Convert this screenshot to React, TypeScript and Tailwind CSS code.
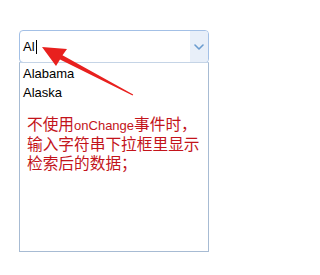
import React from "react";

const states = ["Alabama", "Alaska"];

function Chevron() {
  return (
    <svg width="10" height="6" viewBox="0 0 10 6" fill="none">
      <path d="M1 1l4 4 4-4" stroke="#6a9ccf" strokeWidth="1.6" strokeLinecap="round" strokeLinejoin="round" />
    </svg>
  );
}

export default function App() {
  return (
    <div
      className="relative w-[237px] h-[275px] bg-white pt-[30px] pl-[19px]"
      style={{ fontFamily: '"Liberation Sans", "Noto Sans CJK SC", sans-serif' }}
    >
      <div className="w-[190px]">
        <div className="flex h-[33px] border border-[#a3c0e6] rounded-[4px] overflow-hidden">
          <div className="flex-1 flex items-center pl-[3px] text-[13px] text-black">
            <span>Al</span>
            <span className="ml-[1px] w-px h-[14px] bg-black" />
          </div>
          <div className="w-[18px] flex items-center justify-center bg-[#e8eff9]">
            <Chevron />
          </div>
        </div>
        <div className="h-[190px] border border-[#a7bbd3] border-t-[#c5d4e6] -mt-px">
          <ul className="text-[13px] leading-[19px] text-black pl-[3px] pt-[1px]">
            {states.map((s) => (
              <li key={s}>{s}</li>
            ))}
          </ul>
          <p className="mt-[13px] pl-[7px] text-[15.7px] leading-[19px] text-[#c3141b]">
            不使用<span className="text-[13px]">onChange</span>事件时，
            <br />
            输入字符串下拉框里显示
            <br />
            检索后的数据；
          </p>
        </div>
      </div>
      <svg className="absolute left-0 top-0 pointer-events-none" width="237" height="275">
        <polygon
          points="42,47 67,49 62.5,55.2 133.2,94.4 132.6,95.4 60,59.5 56,66"
          fill="#e8201e"
        />
      </svg>
    </div>
  );
}
